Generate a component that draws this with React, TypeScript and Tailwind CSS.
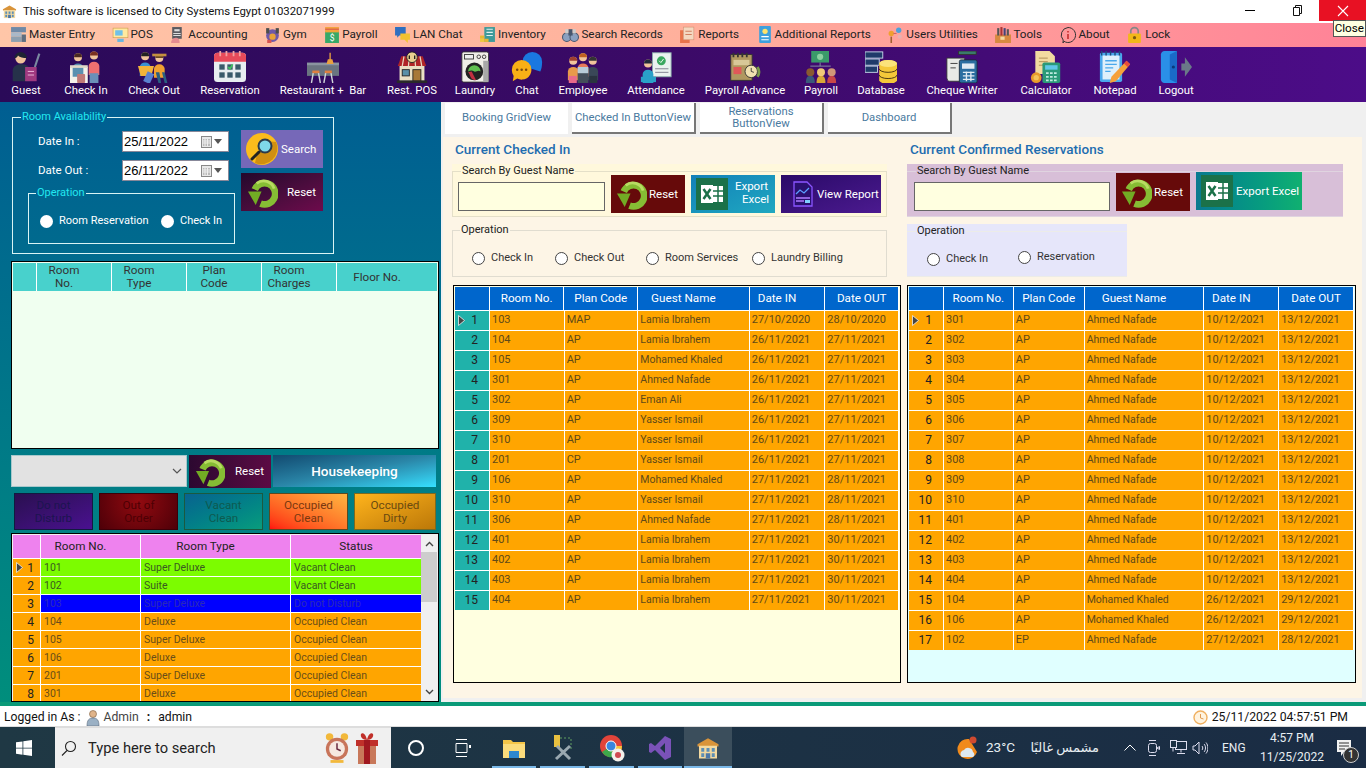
import { ReactNode } from 'react';

const FONT = "font-['Roboto','Liberation_Sans',sans-serif]";

type IconProps = { s?: number };

function Hotel({ s = 16 }: IconProps) {
  return (
    <svg width={s} height={s} viewBox="0 0 32 32">
      <path d="M2 11 16 3l14 8v3H2z" fill="#d9943a" />
      <rect x="4" y="13" width="24" height="17" fill="#f3d9a0" />
      <rect x="7" y="16" width="4" height="5" fill="#5d8fb5" />
      <rect x="14" y="16" width="4" height="5" fill="#5d8fb5" />
      <rect x="21" y="16" width="4" height="5" fill="#5d8fb5" />
      <rect x="7" y="23" width="4" height="5" fill="#5d8fb5" />
      <rect x="13" y="23" width="6" height="7" fill="#4d78a8" />
      <rect x="21" y="23" width="4" height="5" fill="#5d8fb5" />
    </svg>
  );
}

function ResetIcon({ s = 32 }: IconProps) {
  return (
    <svg width={s} height={s} viewBox="0 0 32 32" fill="none">
      <path d="M8 13A11 11 0 1 1 14 27.500" stroke="#86bd34" strokeWidth="7" />
      <path d="M10 6.500A11.500 11.500 0 0 1 28 12" stroke="#b8dc62" strokeWidth="3" />
      <path d="M1 15h14l-6 14z" fill="#72ab24" />
    </svg>
  );
}

function SearchIcon({ s = 32 }: IconProps) {
  return (
    <svg width={s} height={s} viewBox="0 0 32 32">
      <circle cx="16" cy="16" r="16" fill="#fbbc1c" />
      <path d="M30 9a16 16 0 0 1-21 21L11 21l10-13z" fill="#d08f10" />
      <path d="m6 26 7-7" stroke="#222" strokeWidth="3" strokeLinecap="round" />
      <circle cx="19" cy="13" r="6.500" fill="#7fd8ea" stroke="#2b3a4a" strokeWidth="2" />
    </svg>
  );
}

function ExcelIcon({ s = 32 }: IconProps) {
  return (
    <svg width={s} height={s} viewBox="0 0 32 32">
      <rect width="32" height="32" fill="#1b7149" />
      <rect x="17" y="8" width="10" height="16" fill="#fff" />
      <path d="M17 13h10M17 18h10M22 8v16" stroke="#1b7149" strokeWidth="1.500" />
      <rect x="5" y="7" width="12" height="18" fill="#fff" />
      <path d="m7.500 11 7 10m0-10-7 10" stroke="#1b7149" strokeWidth="2.500" />
    </svg>
  );
}

function ReportIcon({ s = 26 }: IconProps) {
  return (
    <svg width={s} height={s} viewBox="0 0 26 26" fill="none">
      <path d="M4 1h13l5 5v19H4z" stroke="#8a55ff" strokeWidth="1.300" fill="#2a1070" />
      <path d="m6 13 4-4 4 3 5-5" stroke="#5aa0ff" strokeWidth="1.300" />
      <path d="M6 17h14M6 20h8" stroke="#b07dff" strokeWidth="1.500" />
      <rect x="15" y="19" width="5" height="3" fill="#7fd0ff" />
    </svg>
  );
}

/* small menu icons, 16px */
const menuIcons: ReactNode[] = [
  <svg key="0" width="17" height="17" viewBox="0 0 16 16"><rect x="1" y="1" width="14" height="5" fill="#6f8aa8" /><rect x="1" y="6" width="10" height="4" fill="#a9b8c8" /><rect x="1" y="10" width="10" height="5" fill="#8ea0b0" /><rect x="11" y="8" width="4" height="7" fill="#5d6e80" /></svg>,
  <svg key="1" width="17" height="17" viewBox="0 0 16 16"><rect x="1" y="2" width="14" height="9" fill="#ffe9a0" stroke="#d0a050" strokeWidth=".6" /><rect x="3" y="4" width="7" height="5" fill="#6fc0e8" /><rect x="5" y="12" width="6" height="3" fill="#67b6e0" /></svg>,
  <svg key="2" width="17" height="17" viewBox="0 0 16 16"><rect x="3" y="1" width="9" height="11" fill="#5a5a60" /><rect x="5" y="3" width="5" height="2" fill="#ddd" /><path d="M4 7h7M4 9h7" stroke="#ddd" /><path d="M2 16c0-4 3-5 5-5s3 2 3 5z" fill="#e58b90" /></svg>,
  <svg key="3" width="17" height="17" viewBox="0 0 16 16"><circle cx="8" cy="9" r="6" fill="#7058a8" /><rect x="2" y="2" width="3" height="5" fill="#4d4d4d" /><rect x="11" y="2" width="3" height="5" fill="#4d4d4d" /><circle cx="8" cy="10" r="3" fill="#e9a23a" /><path d="M3 13h4v3H3z" fill="#d9534f" /></svg>,
  <svg key="4" width="17" height="17" viewBox="0 0 16 16"><rect x="2" y="5" width="13" height="11" fill="#37a968" /><path d="M2 1h13v5H2z" fill="#f2a33a" /><path d="M2 3h13" stroke="#d9534f" /><text x="8.500" y="14" fontSize="8" textAnchor="middle" fill="#fff">$</text></svg>,
  <svg key="5" width="17" height="17" viewBox="0 0 16 16"><path d="M1 1h10v8H5l-2 2V9H1z" fill="#2f6fc0" /><path d="M6 7h9v6h-2v3l-3-3H6z" fill="#f2c230" /></svg>,
  <svg key="6" width="17" height="17" viewBox="0 0 16 16"><rect x="5" y="1" width="10" height="14" fill="#3e9a9a" /><path d="M7 3h6M7 6h6M7 9h6" stroke="#e0f0f0" /><rect x="1" y="9" width="4" height="3" fill="#e8b830" /><rect x="1" y="12" width="4" height="3" fill="#f0c840" /><rect x="5" y="12" width="4" height="3" fill="#e8b830" /></svg>,
  <svg key="7" width="17" height="17" viewBox="0 0 16 16"><circle cx="4.500" cy="10.500" r="4" fill="#8aa0c0" stroke="#46566e" /><circle cx="11.500" cy="10.500" r="4" fill="#8aa0c0" stroke="#46566e" /><rect x="6" y="3" width="4" height="6" fill="#46566e" /><rect x="3" y="3" width="3" height="4" fill="#ccc" /><rect x="10" y="3" width="3" height="4" fill="#ccc" /></svg>,
  <svg key="8" width="17" height="17" viewBox="0 0 16 16"><rect x="1" y="4" width="9" height="12" fill="#e8734a" /><rect x="4" y="1" width="10" height="12" fill="#f4d8c0" stroke="#cf8a6a" strokeWidth=".5" /><path d="M6 5h6M6 8h6" stroke="#d08060" /></svg>,
  <svg key="9" width="17" height="17" viewBox="0 0 16 16"><rect x="3" y="0" width="11" height="16" rx="1" fill="#3fa0dd" /><circle cx="8.500" cy="5" r="2.500" fill="#ffe26a" /><path d="M5 10h7M5 13h7" stroke="#fff" /></svg>,
  <svg key="10" width="17" height="17" viewBox="0 0 16 16"><circle cx="4" cy="7" r="2.500" fill="#f0a030" /><circle cx="11" cy="4" r="2.500" fill="#50a0d8" /><circle cx="12" cy="10" r="2" fill="#e8b0b0" /><path d="M4 10v6" stroke="#a06030" strokeWidth="1.500" /><path d="M6 7h3" stroke="#d06060" /></svg>,
  <svg key="11" width="17" height="17" viewBox="0 0 16 16"><rect x="1" y="8" width="15" height="8" fill="#d88a40" /><rect x="3" y="2" width="2" height="7" fill="#555" /><rect x="6" y="1" width="2" height="8" fill="#a33" /><rect x="9" y="2" width="2" height="7" fill="#447" /><rect x="12" y="3" width="2" height="6" fill="#555" /><rect x="6" y="10" width="4" height="3" fill="#f4d9a0" /></svg>,
  <svg key="12" width="18" height="18" viewBox="0 0 18 18" fill="none" stroke="#333" strokeWidth="1"><path d="M9 1.500a7.500 7.500 0 1 1-4 13.800L4 17l.2-3A7.500 7.500 0 0 1 9 1.500z" /><path d="M9 8v5M9 5v1.500" strokeWidth="1.400" stroke="#c02020" /></svg>,
  <svg key="13" width="17" height="17" viewBox="0 0 16 16"><path d="M4.500 8V5a3.500 3.500 0 0 1 7 0v3" fill="none" stroke="#888" strokeWidth="1.600" /><rect x="2" y="7" width="12" height="9" rx="1" fill="#f2b818" /><circle cx="8" cy="11" r="1.500" fill="#7a5a10" /></svg>,
];

const menuItems = ['Master Entry', 'POS', 'Accounting', 'Gym', 'Payroll', 'LAN Chat', 'Inventory', 'Search Records', 'Reports', 'Additional Reports', 'Users Utilities', 'Tools', 'About', 'Lock'];

/* toolbar icons, viewBox 36 */
const Person = ({ x, y, c, h = '#4a2a20', skin = '#f1c49c' }: { x: number; y: number; c: string; h?: string; skin?: string }) => (
  <g>
    <path d={`M${x - 6} ${y + 22}v-10a6 5 0 0 1 12 0v10z`} fill={c} />
    <circle cx={x} cy={y} r="4.500" fill={skin} />
    <path d={`M${x - 4.500} ${y}a4.500 4.500 0 0 1 9 0z`} fill={h} />
  </g>
);

const toolIcons: ReactNode[] = [
  <svg key="a" width="36" height="36" viewBox="0 0 36 36"><path d="M3 34V22c0-5 5-7 10-7s9 2 9 7v12z" fill="#26324a" /><circle cx="12" cy="8" r="6" fill="#f1c49c" /><path d="M5 8a7 7 0 0 1 14 0c-4 0-8-1-10-3-1 2-2 3-4 3z" fill="#1d2433" /><rect x="17" y="18" width="13" height="16" fill="#a03a80" /><path d="M20 23h7M20 27h7" stroke="#f0c0e0" /><path d="m28 18 5-15" stroke="#7a8aa0" strokeWidth="2.400" /></svg>,
  <svg key="b" width="36" height="36" viewBox="0 0 36 36"><rect x="0" y="18" width="20" height="18" fill="#f4f1ea" /><Person x={9} y={7} c="#5a90b0" /><rect x="0" y="16" width="20" height="3" fill="#e0d8c8" /><rect x="8" y="26" width="9" height="10" rx="1" fill="#c07a78" /><Person x={27} y={5} c="#ee7070" h="#7a3020" /><rect x="22" y="25" width="10" height="11" fill="#6a90b8" /></svg>,
  <svg key="c" width="36" height="36" viewBox="0 0 36 36"><Person x={8} y={6} c="#3a90d0" h="#222" /><path d="M0 17h18l-3 11H3z" fill="#f2b33a" /><Person x={24} y={8} c="#f0a030" h="#6a4a20" /><path d="M16 3h16v3H16z" fill="#c49040" /><path d="M20 24h4l2 12h-3zM27 24h3l3 12h-3z" fill="#2a6080" /><rect x="8" y="24" width="8" height="12" transform="rotate(25 12 30)" fill="#5a80d0" /></svg>,
  <svg key="d" width="36" height="36" viewBox="0 0 36 36"><rect x="0" y="2" width="36" height="33" rx="4" fill="#e8edf0" /><path d="M0 6a4 4 0 0 1 4-4h28a4 4 0 0 1 4 4v6H0z" fill="#e84a5a" /><path d="M7 0v6M14 0v6M22 0v6M29 0v6" stroke="#f4a0a0" strokeWidth="2" /><rect x="6" y="15" width="6" height="6" fill="#3a5a6a" /><rect x="15" y="15" width="6" height="6" fill="#3a5a6a" /><rect x="24" y="15" width="6" height="6" fill="#3a5a6a" /><rect x="6" y="24" width="6" height="6" fill="#3a5a6a" /><rect x="15" y="24" width="6" height="6" fill="#3a5a6a" /><rect x="24" y="24" width="6" height="6" fill="#3a5a6a" /><path d="m16 18 2 2 3-5" stroke="#40c060" strokeWidth="2" fill="none" /></svg>,
  <svg key="e" width="36" height="36" viewBox="0 0 36 36"><rect x="0" y="14" width="36" height="14" fill="#6a7480" /><rect x="0" y="13" width="36" height="3" fill="#8a94a0" /><path d="M26 2v8M24 10h4l1 4h-6z" fill="#e8a040" stroke="#e8a040" strokeWidth="1.500" /><rect x="6" y="22" width="8" height="3" fill="#e08040" /><rect x="20" y="22" width="8" height="3" fill="#e08040" /><path d="M7 25 5 36M13 25l2 11M21 25l-2 11M27 25l2 11" stroke="#cfd4d8" strokeWidth="1.600" /></svg>,
  <svg key="f" width="36" height="36" viewBox="0 0 36 36"><rect x="4" y="16" width="28" height="18" fill="#eadfc4" /><path d="M6 6h24l4 11H2z" fill="#b02428" /><path d="M9 6 7 17M15 6l-1 11M21 6l1 11M27 6l2 11" stroke="#e6d8c0" strokeWidth="1.400" /><circle cx="18" cy="7" r="6" fill="#e8cf90" stroke="#222" /><path d="M15 5v4M21 5v4" stroke="#222" strokeWidth="1.500" /><rect x="7" y="21" width="8" height="7" fill="#5a90a8" stroke="#222" /><rect x="19" y="21" width="9" height="13" fill="#a87838" stroke="#222" /><rect x="1" y="33" width="34" height="3" fill="#2a2a2a" /></svg>,
  <svg key="g" width="32" height="36" viewBox="0 0 32 36"><rect x="1" y="1" width="30" height="34" rx="2" fill="#f0eee8" stroke="#333" /><rect x="4" y="4" width="10" height="5" fill="#eee" stroke="#333" /><circle cx="20" cy="6.500" r="2" fill="none" stroke="#333" /><circle cx="26" cy="6.500" r="2" fill="none" stroke="#333" /><circle cx="15" cy="23" r="10" fill="#222" /><path d="M8 23a7 7 0 0 1 14 0c-3-2-5 1-7 0-3-2-5-1-7 0z" fill="#60c050" /><path d="M8 24c3 3 2 9 9 9l-5-10z" fill="#c03040" /><rect x="25" y="11" width="6" height="24" fill="#a8a8a8" /></svg>,
  <svg key="h" width="36" height="36" viewBox="0 0 36 36"><path d="M13 12a11 11 0 0 1 22 0c0 5-1 9-2 11l-20-6z" fill="#1a78e0" /><path d="M1 21a11 11 0 0 1 22 0 11 11 0 0 1-16 10l-5 3 1-6a11 11 0 0 1-2-7z" fill="#f9b016" /><circle cx="7" cy="21" r="1.400" fill="#7a4a10" /><circle cx="12" cy="21" r="1.400" fill="#7a4a10" /><circle cx="17" cy="21" r="1.400" fill="#7a4a10" /></svg>,
  <svg key="i" width="36" height="36" viewBox="0 0 36 36"><Person x={7} y={11} c="#e89a4a" h="#a04030" /><Person x={29} y={11} c="#3a4858" h="#333" /><Person x={18} y={7} c="#e87a5a" h="#c06020" /><rect x="12" y="24" width="12" height="12" fill="#444f5a" /><rect x="2" y="28" width="9" height="8" fill="#e86a8a" /><rect x="25" y="28" width="9" height="8" fill="#2a3440" /><rect x="12" y="18" width="12" height="7" fill="#b8ccd8" /></svg>,
  <svg key="j" width="36" height="36" viewBox="0 0 36 36"><rect x="14" y="2" width="21" height="27" fill="#eaf2f0" stroke="#8aa" /><circle cx="24" cy="11" r="5" fill="#3aa860" /><path d="m21.500 11 2 2 3-4" stroke="#fff" fill="none" /><path d="M17 20h15M17 24h15" stroke="#778" /><Person x={9} y={14} c="#2aa0c8" h="#1f2a3a" /><rect x="1" y="29" width="17" height="6" fill="#2aa0c8" /></svg>,
  <svg key="k" width="36" height="36" viewBox="0 0 36 36"><rect x="2" y="4" width="24" height="29" fill="#b09860" stroke="#333" /><path d="M5 2v5M10 2v5M15 2v5M20 2v5" stroke="#333" strokeWidth="2" /><rect x="5" y="10" width="18" height="6" fill="#d8c898" /><rect x="5" y="18" width="9" height="8" fill="#e05858" /><circle cx="25" cy="23" r="7" fill="#f0e0b0" stroke="#333" /><path d="M25 19v4l3 1" stroke="#333" fill="none" /><path d="M32 18a10 10 0 0 1 0 11" stroke="#7a9a4a" strokeWidth="3" fill="none" /></svg>,
  <svg key="l" width="36" height="36" viewBox="0 0 36 36"><rect x="7" y="0" width="20" height="13" fill="#3a9a6a" /><circle cx="17" cy="6.500" r="3.500" fill="#8ad0a0" /><path d="M17 13v4M6 17h23" stroke="#8a9aa8" /><circle cx="6" cy="24" r="4.500" fill="#8a5a30" /><path d="M1 36c0-7 2-8 5-8s5 1 5 8z" fill="#3a5a7a" /><circle cx="18" cy="24" r="4.500" fill="#f0c878" /><path d="M13 36c0-7 2-8 5-8s5 1 5 8z" fill="#d8a838" /><circle cx="30" cy="24" r="4.500" fill="#d09878" /><path d="M25 36c0-7 2-8 5-8s5 1 5 8z" fill="#c84848" /></svg>,
  <svg key="m" width="36" height="36" viewBox="0 0 36 36"><rect x="0" y="1" width="20" height="7" fill="#1f3a6a" stroke="#cde" /><rect x="0" y="9" width="16" height="7" fill="#1f3a6a" stroke="#cde" /><rect x="0" y="17" width="14" height="7" fill="#1f3a6a" stroke="#cde" /><path d="M16 14a10 4 0 0 1 20 0v19a10 4 0 0 1-20 0z" fill="#f4c83a" /><ellipse cx="26" cy="14" rx="10" ry="4" fill="#fbe27a" /><path d="M16 20a10 4 0 0 0 20 0M16 27a10 4 0 0 0 20 0" stroke="#3a2a10" fill="none" /></svg>,
  <svg key="n" width="36" height="36" viewBox="0 0 36 36"><path d="M1 8h20v26H4c-2 0-3-2-3-4z" fill="#e8eae6" stroke="#333" /><path d="M5 14h8M5 19h6" stroke="#333" /><rect x="14" y="0" width="20" height="4" fill="#3a7a6a" stroke="#333" /><rect x="15" y="10" width="20" height="26" rx="2" fill="#2a6ea0" stroke="#1a2a3a" /><rect x="18" y="14" width="14" height="6" fill="#dfeaf2" /><path d="M19 24h13M19 28h13M19 32h13M23 23v11M28 23v11" stroke="#dfeaf2" strokeWidth="1.500" /></svg>,
  <svg key="o" width="36" height="36" viewBox="0 0 36 36"><path d="M6 0h16l6 6v20H6z" fill="#f2dba0" /><path d="M10 8h10M10 12h10M10 16h6" stroke="#a88a50" /><rect x="14" y="13" width="20" height="23" rx="2" fill="#2a9a78" /><rect x="17" y="16" width="14" height="5" fill="#5fc8e8" /><path d="M18 25h12M18 29h12M18 33h12" stroke="#bfeadf" strokeWidth="2" strokeDasharray="3 1.500" /><circle cx="7" cy="30" r="6" fill="#e89a2a" /><circle cx="7" cy="30" r="3" fill="#f6c45a" /></svg>,
  <svg key="p" width="36" height="36" viewBox="0 0 36 36"><rect x="1" y="2" width="25" height="33" rx="2" fill="#4aa8ec" /><rect x="4" y="5" width="19" height="27" fill="#dff0fb" /><path d="M3 0v5M8 0v5M13 0v5M18 0v5M23 0v5" stroke="#1f4a7a" strokeWidth="1.600" /><path d="M7 11h13M7 15h13M7 19h9M7 23h6" stroke="#4aa8ec" strokeWidth="1.500" /><path d="M31 11 35 15 19 34l-7 2 2-7z" fill="#f6a13a" /><path d="m31 11 4 4-3 3-4-4z" fill="#e84a3a" /></svg>,
  <svg key="q" width="36" height="36" viewBox="0 0 36 36"><path d="M1 4c0-2 2-4 4-4h14v36H5c-2 0-4-2-4-4z" fill="#2a8fe8" /><path d="M19 0v36l-8-4V4z" fill="#1a6ac8" /><circle cx="15" cy="18" r="1.800" fill="#0a3a7a" /><path d="M24 14h4V7l8 11-8 11v-7h-4z" fill="#6a7a88" /></svg>,
];

const toolItems: [string, number][] = [
  ['Guest', 52], ['Check In', 68], ['Check Out', 68], ['Reservation', 84], ['Restaurant +  Bar', 102], ['Rest. POS', 76], ['Laundry', 50], ['Chat', 54], ['Employee', 58],
  ['Attendance', 88], ['Payroll Advance', 90], ['Payroll', 62], ['Database', 58], ['Cheque Writer', 104], ['Calculator', 64], ['Notepad', 74], ['Logout', 48],
];

const checkedIn = [
  ['103', 'MAP', 'Lamia Ibrahem', '27/10/2020', '28/10/2020'],
  ['104', 'AP', 'Lamia Ibrahem', '26/11/2021', '27/11/2021'],
  ['105', 'AP', 'Mohamed Khaled', '26/11/2021', '27/11/2021'],
  ['301', 'AP', 'Ahmed Nafade', '26/11/2021', '27/11/2021'],
  ['302', 'AP', 'Eman Ali', '26/11/2021', '27/11/2021'],
  ['309', 'AP', 'Yasser Ismail', '26/11/2021', '27/11/2021'],
  ['310', 'AP', 'Yasser Ismail', '26/11/2021', '27/11/2021'],
  ['201', 'CP', 'Yasser Ismail', '26/11/2021', '27/11/2021'],
  ['106', 'AP', 'Mohamed Khaled', '27/11/2021', '28/11/2021'],
  ['310', 'AP', 'Yasser Ismail', '27/11/2021', '28/11/2021'],
  ['306', 'AP', 'Ahmed Nafade', '27/11/2021', '28/11/2021'],
  ['401', 'AP', 'Lamia Ibrahem', '27/11/2021', '30/11/2021'],
  ['402', 'AP', 'Lamia Ibrahem', '27/11/2021', '30/11/2021'],
  ['403', 'AP', 'Lamia Ibrahem', '27/11/2021', '30/11/2021'],
  ['404', 'AP', 'Lamia Ibrahem', '27/11/2021', '30/11/2021'],
];

const confirmed = [
  ...['301', '302', '303', '304', '305', '306', '307', '308', '309', '310', '401', '402', '403', '404'].map((r) => [r, 'AP', 'Ahmed Nafade', '10/12/2021', '13/12/2021']),
  ['104', 'AP', 'Mohamed Khaled', '26/12/2021', '29/12/2021'],
  ['106', 'AP', 'Mohamed Khaled', '26/12/2021', '29/12/2021'],
  ['102', 'EP', 'Ahmed Nafade', '27/12/2021', '28/12/2021'],
];

const housekeeping = [
  ['101', 'Super Deluxe', 'Vacant Clean', 'g'],
  ['102', 'Suite', 'Vacant Clean', 'g'],
  ['103', 'Super Deluxe', 'Do not Disturb', 'b'],
  ['104', 'Deluxe', 'Occupied Clean', 'o'],
  ['105', 'Super Deluxe', 'Occupied Clean', 'o'],
  ['106', 'Deluxe', 'Occupied Clean', 'o'],
  ['201', 'Super Deluxe', 'Occupied Clean', 'o'],
  ['301', 'Deluxe', 'Occupied Clean', 'o'],
];

function Arrow() {
  return (
    <svg width="7" height="11" viewBox="0 0 7 11" className="mr-auto ml-[3px]">
      <path d="M.5.500 6.500 5.500.5 10.500z" fill="#444" stroke="#eee" strokeWidth=".8" />
    </svg>
  );
}

function BookingGrid({ rows, widths, rowHead, empty, headers }: { rows: string[][]; widths: number[]; rowHead: string; empty: string; headers: string[] }) {
  return (
    <div className={`flex h-[398px] flex-col overflow-hidden border border-black p-px ${empty}`}>
      <div className="flex h-[23px] shrink-0 bg-[#0066cc] text-[11.700px] text-white">
        {[''].concat(headers).map((h, i) => (
          <div key={i} style={{ width: i === 0 ? 35 : widths[i - 1] }} className={`flex items-center justify-center border-r border-white ${i === 3 || i === 4 ? 'pr-[20px]' : ''}`}>
            {h}
          </div>
        ))}
      </div>
      {rows.map((r, i) => (
        <div key={i} className="flex h-[20px] shrink-0 border-t border-white bg-[#ffa500] text-[11px] text-[#5f4a18]">
          <div className={`flex w-[35px] shrink-0 items-center justify-end border-r border-white pr-[11px] pb-px text-[12px] text-[#222] ${rowHead}`}>
            {i === 0 && <Arrow />}
            {i + 1}
          </div>
          {r.map((c, j) => (
            <div key={j} style={{ width: widths[j] }} className={`flex items-center border-r border-white pl-[2px] ${j === 2 ? 'pb-px text-[10.500px]' : ''}`}>
              {c}
            </div>
          ))}
        </div>
      ))}
    </div>
  );
}

function Radio({ label, white, className = '' }: { label: string; white?: boolean; className?: string }) {
  return (
    <span className={`inline-flex items-center gap-[6px] text-[11px] whitespace-nowrap ${className}`}>
      <span className={`h-[13px] w-[13px] shrink-0 rounded-full ${white ? 'bg-white' : 'border border-[#444] bg-white'}`} />
      {label}
    </span>
  );
}

function DateBox({ value }: { value: string }) {
  return (
    <div className="flex h-[21px] w-[107px] items-center border border-[#889] bg-white pr-[6px] pl-[1px] font-['Liberation_Sans',sans-serif] text-[13px] text-black">
      {value}
      <svg width="12" height="12" viewBox="0 0 12 12" className="ml-auto"><rect x=".5" y=".5" width="10" height="11" fill="#e8e8e8" stroke="#888" /><path d="M2 3h7v7H2z" fill="#bbb" /><path d="M2 5h7M2 7h7M4 3v7M6.500 3v7" stroke="#eee" /></svg>
      <svg width="8" height="5" viewBox="0 0 8 5" className="ml-[1px]"><path d="M0 0h8L4 5z" fill="#555" /></svg>
    </div>
  );
}

function ImgButton({ className, icon, children, textClass = '' }: { className: string; icon: ReactNode; children: ReactNode; textClass?: string }) {
  return (
    <div className={`flex shrink-0 items-center text-[11.500px] leading-[13px] text-white ${className}`}>
      {icon}
      <span className={`text-center whitespace-nowrap ${textClass}`}>{children}</span>
    </div>
  );
}

function StatusBtn({ label, className }: { label: ReactNode; className: string }) {
  return (
    <div className={`flex h-[37px] items-center justify-center border text-center text-[11.700px] leading-[13px] ${className}`}>{label}</div>
  );
}

const CHECKED_W = [75, 74, 112, 76, 74];
const CONF_W = [70, 71, 120, 75, 75];
const GRID_HEAD = ['Room No.', 'Plan Code', 'Guest Name', 'Date IN', 'Date OUT'];

export default function App() {
  return (
    <div className={`flex h-[768px] w-[1366px] flex-col overflow-hidden bg-white text-[11.500px] text-black ${FONT}`}>
      {/* Title bar */}
      <div className="relative flex h-[23px] shrink-0 items-center pl-[2px]">
        <Hotel s={15} />
        <span className="ml-[6px] text-[11.400px] text-[#111]">This software is licensed to City Systems Egypt 01032071999</span>
        <div className="ml-auto flex h-[21px] self-start">
          <div className="flex w-[46px] items-center justify-center">
            <div className="h-px w-[10px] bg-black" />
          </div>
          <div className="flex w-[46px] items-center justify-center">
            <svg width="11" height="11" viewBox="0 0 11 11" fill="none" stroke="#111"><path d="M2.500 2.500h6v8h-6zM4.500 2.500V.5h6v8h-2" /></svg>
          </div>
          <div className="flex w-[47px] items-center justify-center bg-[#e81123]">
            <svg width="12" height="12" viewBox="0 0 12 12" stroke="#fff" strokeWidth="1.100"><path d="m1 1 10 10M11 1 1 11" /></svg>
          </div>
        </div>
        <div className="absolute top-[20px] right-0 z-10 border border-[#555] bg-[#ffffe1] px-[1px] text-[11.700px] leading-[15px] text-black">Close</div>
      </div>

      {/* Menu */}
      <div className="flex h-[24px] shrink-0 items-center gap-[16.500px] bg-gradient-to-r from-[#ffc6a8] via-[#ffb09c] to-[#ff8297] pl-[10px] text-[11.700px] text-[#222]">
        {menuItems.map((m, i) => (
          <div key={m} className="flex items-center gap-[2px]">
            {menuIcons[i]}
            <span>{m}</span>
          </div>
        ))}
      </div>

      {/* Toolbar */}
      <div className="flex h-[55px] shrink-0 bg-gradient-to-r from-[#2a0a58] via-[#3c0a68] to-[#4c0c88] pt-[4px] text-[11.300px] text-white">
        {toolItems.map(([t, w], i) => (
          <div key={t} style={{ width: w }} className="flex shrink-0 flex-col items-center">
            <div className="flex h-[32px] items-start [&>svg]:h-[32px] [&>svg]:w-auto">{toolIcons[i]}</div>
            <span className="mt-[1px] whitespace-pre leading-[14px]">{t}</span>
          </div>
        ))}
      </div>

      {/* Main */}
      <div className="flex h-[600px] shrink-0">
        {/* Left panel */}
        <div className="flex w-[441px] shrink-0 flex-col bg-gradient-to-b from-[#005e92] to-[#008e7c] pr-[2px] pl-[11px]">
          <fieldset className="mt-[8px] ml-px h-[144px] w-[322px] border border-[#d8f4f4] text-white">
            <legend className="ml-[8px] px-[1px] text-[11px] leading-[14px] text-[#22e8f0]">Room Availability</legend>
            <div className="flex">
              <div className="ml-[15px] w-[207px]">
                <div className="mt-[7px] flex h-[21px] items-center">
                  <span className="ml-[10px] w-[84px]">Date In :</span>
                  <DateBox value="25/11/2022" />
                </div>
                <div className="mt-[8px] flex h-[21px] items-center">
                  <span className="ml-[10px] w-[84px]">Date Out :</span>
                  <DateBox value="26/11/2022" />
                </div>
                <fieldset className="mt-[5px] h-[58px] w-[207px] border border-[#d8f4f4]">
                  <legend className="ml-[7px] px-[1px] text-[11px] leading-[14px] text-[#22e8f0]">Operation</legend>
                  <div className="mt-[13px] ml-[11px] flex">
                    <Radio white label="Room Reservation" className="w-[121px]" />
                    <Radio white label="Check In" />
                  </div>
                </fieldset>
              </div>
              <div className="ml-[6px] flex flex-col gap-[5px] pt-[6px]">
                <ImgButton className="h-[38px] w-[82px] bg-[#7668b8] pl-[5px]" icon={<SearchIcon s={32} />} textClass="ml-[3px]">Search</ImgButton>
                <ImgButton className="h-[38px] w-[82px] bg-gradient-to-br from-[#24082c] to-[#6e0a4c] pl-[6px]" icon={<ResetIcon s={31} />} textClass="ml-[9px]">Reset</ImgButton>
              </div>
            </div>
          </fieldset>

          {/* Availability grid */}
          <div className="mt-[7px] h-[188px] w-[428px] border border-black bg-[#f0fff0] p-px">
            <div className="flex h-[28px] bg-[#48d1cc] text-center text-[11.700px] leading-[13px] text-[#333]">
              <div className="w-[24px] border-r border-white" />
              {[
                ['Room', 'No.'],
                ['Room', 'Type'],
                ['Plan', 'Code'],
                ['Room', 'Charges'],
              ].map((h) => (
                <div key={h[0] + h[1]} className="flex w-[75px] flex-col items-center justify-center border-r border-white pr-[20px]">
                  <span>{h[0]}</span>
                  <span>{h[1]}</span>
                </div>
              ))}
              <div className="flex w-[100px] items-center justify-center pr-[20px]">Floor No.</div>
            </div>
          </div>

          {/* Housekeeping controls */}
          <div className="mt-[6px] flex h-[33px] w-[425px]">
            <div className="flex h-[32px] w-[176px] items-center justify-end border border-[#a8c8cc] bg-[#e2e2e2] pr-[4px]">
              <svg width="10" height="6" viewBox="0 0 10 6" fill="none" stroke="#555" strokeWidth="1.200"><path d="m1 1 4 4 4-4" /></svg>
            </div>
            <ImgButton className="ml-[2px] h-[33px] w-[82px] bg-gradient-to-r from-[#2c0830] to-[#5c0a44] pl-[6px]" icon={<ResetIcon s={30} />} textClass="ml-[10px]">Reset</ImgButton>
            <div className="ml-[2px] flex h-[32px] w-[163px] items-center justify-center bg-gradient-to-br from-[#124a70] via-[#2a86a8] to-[#36e0ff] text-[13.500px] font-medium text-white">Housekeeping</div>
          </div>
          <div className="mt-[5px] ml-[3px] grid w-[422px] grid-cols-[79px_79px_79px_79px_82px] gap-x-[6px]">
            <StatusBtn className="border-[#111a40] bg-gradient-to-br from-[#2a0f50] to-[#4a1090] text-[#1c1450]" label={<>Do not<br />Disturb</>} />
            <StatusBtn className="border-[#3a0008] bg-[radial-gradient(circle_at_50%_20%,#920a10,#4e0008)] text-[#4e0004]" label={<>Out of<br />Order</>} />
            <StatusBtn className="border-[#1a5a40] bg-gradient-to-br from-[#0a628f] to-[#0a9c7c] text-[#0e5a50]" label={<>Vacant<br />Clean</>} />
            <StatusBtn className="border-[#5a4a20] bg-gradient-to-bl from-[#ffb440] to-[#ff0c10] text-[#7a3810]" label={<>Occupied<br />Clean</>} />
            <StatusBtn className="border-[#7a6a20] bg-gradient-to-br from-[#ffb41c] to-[#bc7808] text-[#6a4a10]" label={<>Occupied<br />Dirty</>} />
          </div>

          {/* Housekeeping grid */}
          <div className="mt-[3px] flex h-[169px] w-[428px] overflow-hidden border border-black bg-[#f0f0f0] p-px">
            <div className="w-[408px] shrink-0">
              <div className="flex h-[23px] bg-[#ee82ee] text-[11.700px] text-[#222]">
                <div className="w-[28px] border-r border-white" />
                <div className="flex w-[100px] items-center justify-center border-r border-white pr-[20px]">Room No.</div>
                <div className="flex w-[150px] items-center justify-center border-r border-white pr-[20px]">Room Type</div>
                <div className="flex w-[130px] items-center justify-center">Status</div>
              </div>
              {housekeeping.map((r, i) => {
                const bg = r[3] === 'g' ? 'bg-[#7cfc00] text-[#3a5a20]' : r[3] === 'b' ? 'bg-[#0000ff] text-[#2a2ab8]' : 'bg-[#ffa500] text-[#6a4e18]';
                return (
                  <div key={r[0]} className="flex h-[18px] border-t border-white text-[10.500px]">
                    <div className="flex w-[28px] items-center justify-end border-r border-white bg-[#ffa500] pr-[6px] text-[12px] text-[#222]">
                      {i === 0 && <Arrow />}
                      {i + 1}
                    </div>
                    {[r[0], r[1], r[2]].map((c, j) => (
                      <div key={j} className={`flex items-center pl-[3px] ${j < 2 ? 'border-r border-white' : ''} ${j === 0 ? 'w-[100px]' : j === 1 ? 'w-[150px]' : 'w-[130px]'} ${bg}`}>
                        {c}
                      </div>
                    ))}
                  </div>
                );
              })}
            </div>
            <div className="ml-auto flex w-[16px] flex-col items-center bg-[#f0f0f0]">
              <svg width="9" height="6" viewBox="0 0 9 6" fill="none" stroke="#444" strokeWidth="1.400" className="mt-[6px]"><path d="m1 5 3.500-3.500L8 5" /></svg>
              <div className="mt-[5px] h-[50px] w-full bg-[#cdcdcd]" />
              <svg width="9" height="6" viewBox="0 0 9 6" fill="none" stroke="#444" strokeWidth="1.400" className="mt-auto mb-[5px]"><path d="m1 1 3.500 3.500L8 1" /></svg>
            </div>
          </div>
        </div>

        {/* Right panel */}
        <div className="flex min-w-0 flex-1 flex-col bg-[#f0f0f0]">
          <div className="flex h-[32px] shrink-0 gap-[4px] pt-px pl-[4px] text-center text-[11.300px] leading-[12px] text-[#4a7aa0]">
            <div className="flex h-[31px] w-[123px] items-center justify-center bg-white pb-px">Booking GridView</div>
            {['Checked In ButtonView', 'Reservations ButtonView', 'Dashboard'].map((t) => (
              <div key={t} className="flex h-[31px] w-[124px] items-center justify-center border-r-2 border-b-2 border-[#777] bg-white px-[8px]">
                {t === 'Checked In ButtonView' ? <span className="-mx-[8px] whitespace-nowrap">{t}</span> : t}
              </div>
            ))}
          </div>
          <div className="mt-[3px] mr-[4px] ml-[2px] flex h-[561px] gap-[6px] bg-[#fdf5e6] pt-[4px] pl-[10px]">
            {/* Checked In */}
            <div className="w-[448px] shrink-0">
              <div className="pl-[2px] text-[13.500px] leading-[17px] font-medium text-[#1e6db0]">Current Checked In</div>
              <div className="mt-[6px] -ml-px h-[53px] w-[435px] bg-[#fff8dc]">
                <fieldset className="h-[53px] border border-[#e4dfc8]">
                  <legend className="ml-[8px] px-[1px] text-[11px] leading-[14px] text-[#222]">Search By Guest Name</legend>
                  <div className="flex items-start pl-[5px]">
                    <div className="mt-[4px] h-[29px] w-[147px] border border-[#666] bg-[#ffffe0]" />
                    <ImgButton className="-mt-[3px] ml-[6px] h-[38px] w-[74px] bg-[#660a0a] pl-[5px]" icon={<ResetIcon s={31} />} textClass="ml-[2px]">Reset</ImgButton>
                    <ImgButton className="-mt-[3px] ml-[6px] h-[38px] w-[84px] bg-gradient-to-br from-[#1480b8] to-[#20a8c0] pl-[5px]" icon={<ExcelIcon s={32} />} textClass="ml-[6px] -mt-[2px]">Export<br /><span className="pl-[8px]">Excel</span></ImgButton>
                    <ImgButton className="-mt-[3px] ml-[6px] h-[38px] w-[100px] bg-gradient-to-br from-[#2a0a68] to-[#4c1a90] pl-[9px]" icon={<ReportIcon s={26} />} textClass="ml-[1px]">View Report</ImgButton>
                  </div>
                </fieldset>
              </div>
              <fieldset className="mt-[6px] -ml-px h-[54px] w-[435px] border border-[#e0dcd0] text-[#333]">
                <legend className="ml-[7px] px-[1px] text-[11px] leading-[14px] text-[#222]">Operation</legend>
                <div className="mt-[13px] flex pl-[19px]">
                  <Radio label="Check In" className="w-[83px]" />
                  <Radio label="Check Out" className="w-[91px]" />
                  <Radio label="Room Services" className="w-[106px]" />
                  <Radio label="Laundry Billing" />
                </div>
              </fieldset>
              <div className="mt-[8px]">
                <BookingGrid rows={checkedIn} widths={CHECKED_W} rowHead="bg-[#20b2aa]" empty="bg-[#ffffe0]" headers={GRID_HEAD} />
              </div>
            </div>
            {/* Confirmed */}
            <div className="w-[449px] shrink-0">
              <div className="pl-[3px] text-[13.500px] leading-[17px] font-medium text-[#1e6db0]">Current Confirmed Reservations</div>
              <div className="mt-[6px] h-[53px] w-[436px] bg-[#d8bfd8]">
                <fieldset className="h-[53px] border-t border-b border-[#e0d4e0]">
                  <legend className="ml-[9px] px-[1px] text-[11px] leading-[14px] text-[#222]">Search By Guest Name</legend>
                  <div className="flex items-start pl-[7px]">
                    <div className="mt-[4px] h-[29px] w-[196px] border border-[#666] bg-[#ffffe0]" />
                    <ImgButton className="-mt-[5px] ml-[6px] h-[38px] w-[74px] bg-[#660a0a] pl-[5px]" icon={<ResetIcon s={31} />} textClass="ml-[2px]">Reset</ImgButton>
                    <ImgButton className="-mt-[6px] ml-[6px] h-[38px] w-[106px] bg-gradient-to-r from-[#0a7a90] to-[#10b070] pl-[5px]" icon={<ExcelIcon s={32} />} textClass="ml-[3px]">Export Excel</ImgButton>
                  </div>
                </fieldset>
              </div>
              <div className="mt-[7px] h-[53px] w-[220px] bg-[#e6e6fa]">
                <fieldset className="h-[53px] border-t border-b border-[#ecece8] text-[#333]">
                  <legend className="ml-[9px] px-[1px] text-[11px] leading-[14px] text-[#222]">Operation</legend>
                  <div className="mt-[13px] flex items-start pl-[20px]">
                    <Radio label="Check In" className="w-[91px]" />
                    <Radio label="Reservation" className="-mt-[2px]" />
                  </div>
                </fieldset>
              </div>
              <div className="mt-[8px]">
                <BookingGrid rows={confirmed} widths={CONF_W} rowHead="bg-[#ffa500]" empty="bg-[#e0ffff]" headers={GRID_HEAD} />
              </div>
            </div>
          </div>
        </div>
      </div>

      {/* Green strip */}
      <div className="h-[4px] shrink-0 bg-[#0a9a78]" />

      {/* Status bar */}
      <div className="flex h-[21px] shrink-0 items-center border-b border-[#ddd] pt-[3px] pr-[18px] pl-[4px] text-[12.200px] text-[#111]">
        <span>Logged in As :</span>
        <svg width="14" height="16" viewBox="0 0 14 16" className="ml-[5px]"><circle cx="7" cy="4" r="3.500" fill="#e0b48a" stroke="#7a5a3a" strokeWidth=".6" /><path d="M1 16c0-6 2-8 6-8s6 2 6 8z" fill="#9ab0c4" stroke="#5a6a7a" strokeWidth=".6" /></svg>
        <span className="ml-[4px] text-[#444]">Admin</span>
        <span className="ml-[8px] font-bold">:</span>
        <span className="ml-[8px]">admin</span>
        <svg width="15" height="15" viewBox="0 0 15 15" fill="none" className="ml-auto"><circle cx="7.500" cy="7.500" r="6.500" fill="#fff3df" stroke="#f0b060" strokeWidth="1.400" /><path d="M7.500 4v4l3 1" stroke="#e09a50" /></svg>
        <span className="ml-[4px]">25/11/2022 04:57:51 PM</span>
      </div>

      {/* Taskbar */}
      <div className="flex min-h-0 flex-1 items-center bg-gradient-to-r from-[#1f3844] to-[#1a2c44] text-white">
        <div className="flex h-full w-[55px] shrink-0 items-center justify-center pr-[8px]">
          <svg width="16" height="16" viewBox="0 0 16 16" fill="#fff"><path d="m0 2.300 6.500-.9v6.300H0zM7.300 1.300 16 0v7.700H7.300zM0 8.400h6.500v6.300L0 13.800zM7.300 8.400H16V16l-8.700-1.200z" /></svg>
        </div>
        <div className="flex h-full w-[336px] shrink-0 items-center border-t border-[#ddd] bg-[#f0f0f0] pl-[5px] text-[14.700px] text-[#222]">
          <svg width="16" height="16" viewBox="0 0 16 16" fill="none" stroke="#222" strokeWidth="1.100" className="ml-[1px]"><circle cx="9.500" cy="6.500" r="5" /><path d="M6 10.500 1 15.500" /></svg>
          <span className="ml-[11px]">Type here to search</span>
          <svg width="26" height="34" viewBox="0 0 28 34" className="ml-[108px] shrink-0"><circle cx="6" cy="5" r="4" fill="#f2b83a" /><circle cx="22" cy="5" r="4" fill="#f2b83a" /><circle cx="14" cy="18" r="12" fill="#c8745a" /><circle cx="14" cy="18" r="8.500" fill="#f6e8e0" /><path d="M14 12v6l4 2" stroke="#6a2a40" strokeWidth="1.600" fill="none" /><path d="M7 30h14v3H7z" fill="#f2b83a" /></svg>
          <svg width="24" height="32" viewBox="0 0 24 32" className="ml-[5px] shrink-0"><rect x="1" y="8" width="22" height="6" fill="#c0302a" /><rect x="3" y="14" width="18" height="18" fill="#c8785a" /><rect x="9" y="8" width="6" height="24" fill="#a01820" /><path d="M12 8C8 8 5 5 6 2c2-2 5 1 6 6 1-5 4-8 6-6 1 3-2 6-6 6z" fill="#c0302a" /></svg>
        </div>
        <div className="ml-[17px] h-[16px] w-[16px] shrink-0 rounded-full border-[2.500px] border-white" />
        <svg width="16" height="18" viewBox="0 0 16 18" fill="none" stroke="#fff" className="ml-[31px] shrink-0"><path d="M1 .5h11M1 17.500h11M1 4.500h11v9H1z" /><rect x="14" y="6" width="2" height="3" fill="#fff" stroke="none" /></svg>
        <div className="relative ml-[19px] flex h-full w-[48px] shrink-0 items-center justify-center">
          <svg width="22" height="20" viewBox="0 0 22 20"><path d="M0 2h8l2 2h12v16H0z" fill="#f4c548" /><path d="M0 6h22v14H0z" fill="#fbdc7c" /><rect x="6" y="13" width="10" height="7" fill="#2e87cf" /></svg>
          <div className="absolute right-[2px] bottom-0 left-[2px] h-[2px] bg-[#7ab8e8]" />
        </div>
        <div className="relative flex h-full w-[49px] shrink-0 items-center justify-center">
          <svg width="24" height="26" viewBox="0 0 24 26"><rect x="3" y="0" width="6" height="12" fill="#e8c040" /><path d="M9 3h11v12" fill="none" stroke="#60a060" strokeDasharray="2 2" /><path d="m5 24 14-13M19 24 6 11" stroke="#9aa8b0" strokeWidth="3" /></svg>
          <div className="absolute right-[2px] bottom-0 left-[2px] h-[2px] bg-[#7ab8e8]" />
        </div>
        <div className="relative flex h-full w-[49px] shrink-0 items-center justify-center">
          <svg width="26" height="28" viewBox="0 0 26 28"><circle cx="12" cy="12" r="11" fill="#e2443a" /><path d="M12 12 3 18a11 11 0 0 0 12 5z" fill="#3da84a" /><path d="M12 12l3 11a11 11 0 0 0 8-11z" fill="#f6c43a" /><circle cx="12" cy="12" r="5" fill="#3a86e0" stroke="#fff" /><circle cx="19" cy="21" r="6.500" fill="#f4f0ea" /><circle cx="19" cy="21" r="3" fill="#d04a50" /></svg>
          <div className="absolute right-[2px] bottom-0 left-[2px] h-[2px] bg-[#7ab8e8]" />
        </div>
        <div className="relative flex h-full w-[48px] shrink-0 items-center justify-center">
          <svg width="22" height="24" viewBox="0 0 22 24"><path d="M16 0 22 3v18l-6 3L6 14l-4 3-2-1V8l2-1 4 3zM16 7l-5 5 5 5z" fill="#7a52b8" /></svg>
          <div className="absolute right-[2px] bottom-0 left-[2px] h-[2px] bg-[#7ab8e8]" />
        </div>
        <div className="relative flex h-full w-[48px] shrink-0 items-center justify-center bg-[#3b4e5c]">
          <Hotel s={24} />
          <div className="absolute right-0 bottom-0 left-0 h-[2px] bg-[#7ab8e8]" />
        </div>
        <svg width="24" height="24" viewBox="0 0 24 24" className="ml-[222px] shrink-0"><path d="M15 3a10 10 0 1 0 8 13z" fill="#f08a1c" /><circle cx="19" cy="4" r="3.500" fill="#d04a30" /><path d="M7 20a4 4 0 0 1 3-6 5 5 0 0 1 9 2 3 3 0 0 1 0 5H8z" fill="#dde8f0" /></svg>
        <span className="ml-[8px] shrink-0 text-[13.500px] text-[#e8eef2]">23°C</span>
        <span dir="rtl" className="ml-[12px] w-[72px] shrink-0 font-['Noto_Sans','DejaVu_Sans',sans-serif] text-[13px] whitespace-nowrap text-[#e8eef2]">مشمس غالبًا</span>
        <svg width="12" height="7" viewBox="0 0 12 7" fill="none" stroke="#fff" className="ml-[25px] shrink-0"><path d="m.5 6.500 5.500-5.500 5.500 5.500" /></svg>
        <svg width="12" height="16" viewBox="0 0 12 16" fill="none" stroke="#dde" className="ml-[12px] shrink-0"><path d="M1 .5h7M1 15.500h7" /><rect x=".5" y="3.500" width="8" height="9" rx="2" /><path d="m9 8 2.500-1.500v3z" /></svg>
        <svg width="17" height="15" viewBox="0 0 17 15" fill="none" stroke="#dde" className="ml-[10px] shrink-0"><rect x="5.500" y="1.500" width="11" height="8" /><rect x=".5" y=".5" width="6" height="7" fill="#1c3044" /><path d="M11 9.500v3M7 13.500h8M3 7.500v4" /></svg>
        <svg width="16" height="14" viewBox="0 0 16 14" fill="none" stroke="#dde" className="ml-[5px] shrink-0"><path d="M1 5h2l4-4v12l-4-4H1z" /><path d="M10 5c1 1 1 3 0 4M12 3c2 2 2 6 0 8M14 1.500c2.500 3 2.500 8 0 11" /></svg>
        <span className="ml-[14px] w-[32px] shrink-0 text-[12px] text-[#e8eef2]">ENG</span>
        <div className="ml-[4px] flex w-[68px] shrink-0 flex-col items-center text-[12px] leading-[19px] text-[#e8eef2]">
          <span>4:57 PM</span>
          <span>11/25/2022</span>
        </div>
        <div className="relative ml-[10px] shrink-0">
          <svg width="16" height="18" viewBox="0 0 16 18"><path d="M1 1h14v12H8l-3 4v-4H1z" fill="#f2f2f2" /><path d="M3 4h10M3 7h10M3 10h6" stroke="#333" /></svg>
          <div className="absolute top-[8px] left-[7px] flex h-[16px] w-[16px] items-center justify-center rounded-full border border-[#ccc] bg-[#333] text-[10px] text-white">1</div>
        </div>
      </div>
    </div>
  );
}
